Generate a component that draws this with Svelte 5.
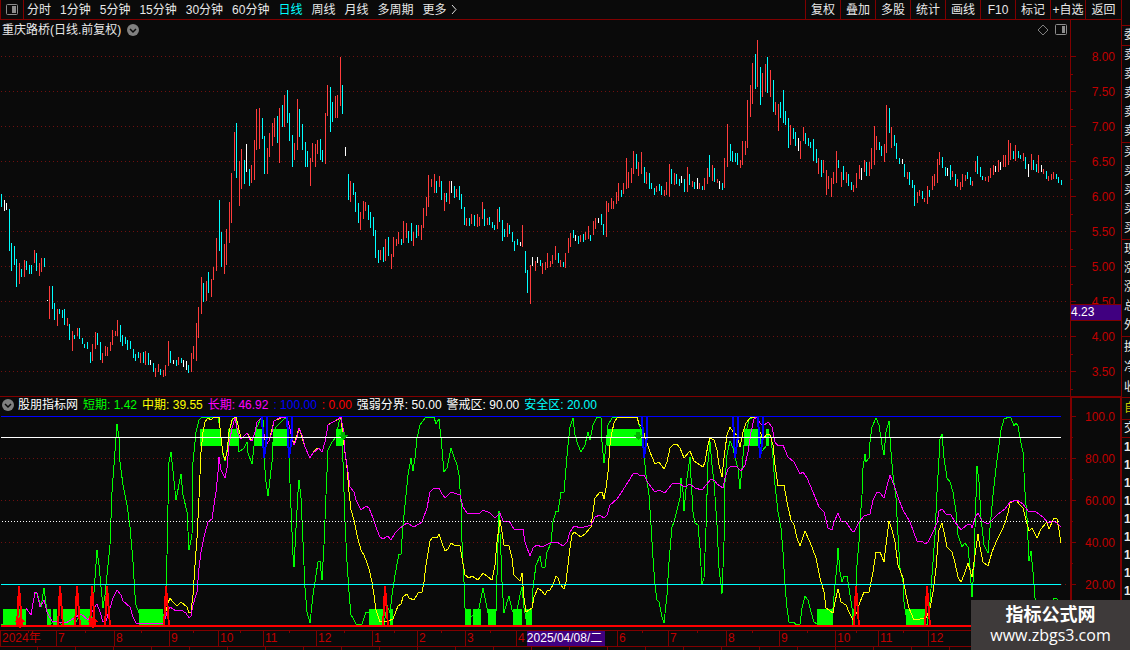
<script lang="ts">
  type Bar = { kind: string; x: number; top: number; height: number };

  const periods = ['分时', '1分钟', '5分钟', '15分钟', '30分钟', '60分钟', '日线', '周线', '月线', '多周期'];
  const tools = ['复权', '叠加', '多股', '统计', '画线', 'F10', '标记', '+自选', '返回'];
  let activePeriod = '日线';

  const priceLabels = ['8.00', '7.50', '7.00', '6.50', '6.00', '5.50', '5.00', '4.50', '4.00', '3.50'];
  const indexLabels = ['100.0', '80.00', '60.00', '40.00', '20.00'];

  const legend = [
    { text: '短期: 1.42', tone: 'green' },
    { text: '中期: 39.55', tone: 'yellow' },
    { text: '长期: 46.92', tone: 'magenta' },
    { text: ': 100.00', tone: 'blue' },
    { text: ': 0.00', tone: 'red' },
    { text: '强弱分界: 50.00', tone: 'white' },
    { text: '警戒区: 90.00', tone: 'white' },
    { text: '安全区: 20.00', tone: 'cyan' }
  ];

  // month cells, span = share of the axis width
  const months = [
    { name: '2024年', span: 56 },
    { name: '7', span: 58 },
    { name: '8', span: 55 },
    { name: '9', span: 49 },
    { name: '10', span: 45 },
    { name: '11', span: 53 },
    { name: '12', span: 56 },
    { name: '1', span: 45 },
    { name: '2', span: 48 },
    { name: '3', span: 51 },
    { name: '4', span: 101 },
    { name: '6', span: 51 },
    { name: '7', span: 58 },
    { name: '8', span: 53 },
    { name: '9', span: 56 },
    { name: '10', span: 43 },
    { name: '11', span: 50 },
    { name: '12', span: 193 }
  ];

  // side quote panel, cut off at the window edge
  const quoteGroups = [
    { kind: 'quote', rows: ['委'] },
    { kind: 'quote five', rows: ['卖', '卖', '卖', '卖', '卖'] },
    { kind: 'quote five', rows: ['买', '买', '买', '买', '买'] },
    { kind: 'quote five', rows: ['现', '涨', '涨', '总', '外'] },
    { kind: 'quote tall', rows: ['换', '净', '收'] },
    { kind: 'tab', rows: ['自'] },
    { kind: 'ticks', rows: ['交'] },
    { kind: 'ticks bold', rows: ['1', '1', '1', '1', '1', '1', '1', '1', '1'] }
  ];

  // kind + x, high, low (r = up, c = down, w = flat)
  const barData = `
    c1,194,207 w4,200,211 w6,203,210 c9,209,251 c11,243,271 c14,246,265 c16,259,287 r19,263,284 c21,269,277 r24,260,277
    c26,261,270 c29,265,274 c31,265,274 r34,250,263 c36,253,271 r39,263,276 r41,258,272 c44,258,267 w47,300,301 r49,286,319
    c52,286,309 c54,303,320 r57,309,326 c59,309,314 c62,310,318 c64,309,325 r67,318,326 c69,324,340 r72,331,351 c74,335,339
    r77,328,336 c79,328,339 c82,338,344 c84,344,348 c87,342,349 c90,352,363 r92,344,361 r95,332,349 c97,333,345 c100,342,360
    r102,353,363 r105,346,356 r107,347,356 r110,342,351 r112,330,345 r115,331,336 r117,320,336 c120,325,342 c122,335,346
    c125,337,344 c127,340,350 c130,341,349 c133,349,358 c135,354,361 c138,352,358 r140,353,363 c143,352,363 r145,351,365
    c148,353,365 w150,360,365 c153,363,372 r155,368,377 r158,364,372 c160,369,375 r163,370,377 r165,365,376 r168,341,366
    c170,351,363 w173,360,364 c176,360,366 r178,357,365 c181,358,363 w183,360,367 w186,361,370 c188,365,373 r191,353,372
    r193,346,359 r196,323,361 r198,307,338 r201,277,314 c203,283,302 r206,281,301 c208,272,293 r211,279,297 r213,267,280
    r216,238,271 c219,200,251 c221,232,267 r224,244,274 r226,229,265 r229,202,243 r231,173,223 r234,132,171 c236,123,178
    r239,161,206 r241,149,189 c244,160,184 w246,144,172 c249,169,186 r251,165,183 r254,140,180 r256,109,150 r259,108,149
    c262,118,139 c264,136,174 r267,148,174 r269,133,157 r272,123,146 r274,118,137 c277,116,143 r279,108,163 c282,105,127
    r284,95,127 c287,90,123 c289,113,141 c292,135,167 r294,143,160 r297,99,150 c299,109,137 c302,124,150 c305,142,167
    c307,151,167 r310,158,186 r312,143,162 r315,144,167 r317,140,154 c320,139,160 c322,150,162 r325,113,164 r327,85,116
    c330,87,132 c332,102,122 r335,96,118 r337,95,118 r340,57,106 c342,85,114 w345,147,156 c348,174,200 r350,181,202
    c353,183,195 c355,192,212 c358,203,223 r360,212,230 r363,201,219 r365,202,211 c368,205,220 c370,212,228 c373,217,236
    c375,230,258 c378,250,263 r380,250,260 c383,247,262 r385,239,261 c388,237,256 r391,254,269 r393,237,257 r396,239,246
    r398,232,244 c401,239,245 r403,221,243 r406,223,238 c408,231,243 c411,223,241 r413,232,246 c416,225,238 r418,225,236
    r421,225,240 r423,208,228 r426,197,216 r428,175,207 r431,179,187 r434,174,193 c436,181,193 r439,176,187 c441,181,200
    r444,193,211 c446,193,202 r449,181,204 w451,181,193 c454,186,198 r456,189,197 c459,186,200 c461,194,209 c464,207,225
    r466,218,226 c469,218,226 r471,214,224 c474,215,226 r477,214,227 r479,217,226 r482,202,219 c484,209,226 r487,218,225
    c489,217,225 c492,222,228 c494,225,230 r497,209,229 c499,207,222 c502,220,241 c504,229,237 r507,223,237 c509,225,234
    c512,232,242 c514,241,251 c517,239,245 w520,242,246 r522,225,247 c525,251,273 c527,270,293 r530,265,304 w532,257,266
    r535,261,271 w537,257,263 c540,260,266 r542,263,274 r545,262,270 r547,253,268 r550,261,267 r552,255,264 r555,246,260
    c558,253,263 r560,260,267 c563,262,267 r565,253,268 r568,238,253 r570,233,247 c573,230,238 w575,235,241 c578,236,244
    r580,235,242 c583,234,242 r585,232,240 r588,226,239 c590,235,241 r593,221,235 r595,218,229 w598,218,223 c601,214,225
    c603,224,235 r606,201,237 r608,203,212 r611,198,209 r613,201,209 r616,192,204 r618,183,201 c621,190,197 r623,183,194
    r626,158,189 r628,172,188 r631,168,183 r633,151,174 c636,154,169 r638,162,176 r641,152,174 c644,167,183 r646,172,184
    c649,173,189 c651,183,189 c654,188,195 r656,186,192 c659,184,191 c661,186,195 r664,190,196 r666,182,195 r669,164,197
    c671,169,184 r674,173,185 c676,174,184 c679,179,186 w681,176,183 c684,179,192 r687,167,192 c689,174,185 r692,181,187
    c694,182,189 w697,178,189 r699,183,189 c702,186,190 r704,178,190 r707,168,184 c709,155,177 r712,165,181 c714,168,182
    r717,179,183 w719,181,189 c722,183,190 r724,158,188 r727,124,167 c730,144,161 c732,151,162 c735,153,162 c737,153,165
    r740,160,168 r742,141,165 r745,141,155 r747,100,148 r750,85,117 r752,63,104 c755,54,89 r757,40,87 c760,67,105
    r762,73,97 r765,64,92 c767,57,93 r770,70,97 c773,80,112 r775,102,115 r778,104,131 c780,102,118 c783,90,123
    c785,111,125 c788,118,148 r790,125,145 c793,128,139 c795,132,146 w798,138,151 r800,141,159 r803,127,141 c805,133,144
    c808,138,146 c810,142,148 c813,139,161 c816,149,163 r818,158,174 c821,160,177 r823,160,173 r826,170,195 r828,176,189
    r831,178,197 r833,172,184 r836,151,183 c838,160,168 r841,172,187 c843,166,180 r846,172,183 c848,174,186 c851,182,190
    r853,185,192 r856,173,188 r859,165,179 w861,168,180 r864,160,172 c866,162,176 r869,162,176 r871,148,169 r874,126,165
    r876,136,150 c879,142,150 c881,146,156 r884,144,162 r886,105,153 c889,108,133 r891,127,148 c894,135,146 c896,143,159
    c899,158,164 w902,159,164 c904,164,177 r907,172,179 c909,172,185 c912,180,188 c914,185,206 r917,192,203 r919,190,196
    c922,191,199 r924,198,202 r927,186,204 c929,190,197 r932,176,190 r934,174,186 r937,159,183 r939,152,165 c942,157,168
    c945,167,176 w947,168,176 c950,165,180 r952,171,177 c955,174,186 r957,179,187 r960,182,190 r962,174,187 r965,175,181
    c967,172,179 c970,177,185 r972,181,186 r975,161,172 c977,156,174 c980,167,177 c982,176,180 r985,177,181 r988,176,182
    r990,168,178 r993,165,175 w995,166,172 r998,160,172 w1000,162,170 r1003,155,167 r1005,155,167 r1008,140,165 r1010,143,160
    c1013,151,159 r1015,145,161 c1018,151,158 c1020,155,159 r1023,153,161 c1025,157,169 w1028,164,177 r1031,154,170
    c1033,160,170 c1036,164,172 r1038,155,173 w1041,165,172 r1043,169,174 c1046,171,179 r1048,176,181 r1051,174,180
    r1053,172,179 c1056,174,179 c1058,177,183 c1061,180,185`;

  const bars: Bar[] = barData.trim().split(/\s+/).map((item) => {
    const [x, top, bottom] = item.slice(1).split(',').map(Number);
    return { kind: item[0], x, top, height: bottom - top };
  });

  const shortLine = `1,624 15,624 19,620 26,609 31,614 35,593 37,593 41,607 44,588 47,612 50,624 57,620 61,624 66,624 76,622 80,614
    83,624 90,621 94,592 97,550 99,565 103,608 105,595 108,565 110,545 112,492 114,465 117,424 119,438 120,462 123,485
    127,505 130,527 133,562 135,595 136,605 139,613 142,624 163,624 166,595 167,555 168,505 169,462 171,452 176,500
    181,474 183,495 187,512 189,550 192,535 193,462 196,432 199,420 202,417 218,417 220,428 223,455 225,461 228,445
    230,428 233,418 236,418 239,452 244,448 247,442 248,453 252,464 255,438 257,427 261,418 263,420 264,458 266,482
    268,496 269,488 272,462 273,442 276,427 285,418 287,418 289,458 291,508 293,555 294,567 296,528 298,492 299,480
    301,498 303,542 305,588 307,612 310,623 313,595 315,582 318,562 320,561 322,580 324,545 326,495 328,450 332,442
    336,437 339,422 341,418 342,432 343,462 345,522 347,562 349,592 351,615 353,618 356,624 362,624 366,612 369,613
    374,624 384,625 387,605 390,613 392,595 395,575 399,554 401,554 403,525 406,495 408,475 411,458 413,471 415,458
    417,438 420,425 425,418 427,417 434,417 436,424 439,419 441,438 444,472 447,468 449,458 451,448 454,457 457,465
    459,475 461,502 462,542 464,582 465,608 467,624 471,617 473,615 476,622 479,608 483,588 487,608 490,622 496,612
    497,575 499,511 501,555 502,582 504,613 507,602 509,596 512,610 516,616 520,595 522,587 524,608 527,624 532,608
    533,588 536,565 540,556 542,567 545,567 547,552 551,543 553,522 556,511 558,512 561,492 564,492 566,468 568,445
    570,427 573,418 575,435 578,445 581,452 585,445 588,432 590,440 593,425 597,417 601,418 602,442 604,463 606,445
    608,425 612,418 618,417 637,417 639,425 642,432 644,455 646,475 649,495 651,525 653,558 655,585 657,600 659,602
    662,617 664,623 667,595 669,562 672,527 674,522 677,510 680,498 681,478 683,492 684,511 687,478 690,457 691,478
    693,512 695,523 698,525 700,548 702,584 704,578 706,528 708,462 710,442 712,465 714,482 717,525 719,568 722,594
    724,542 725,482 727,455 730,441 733,448 735,458 738,468 740,489 742,468 744,445 746,432 749,420 753,417 757,417
    759,428 762,451 767,445 768,433 771,438 773,458 775,485 778,512 781,528 783,552 785,585 787,608 789,622 794,622
    796,625 800,624 802,608 805,596 808,600 811,612 814,622 817,624 828,624 833,608 835,585 837,565 838,548 840,572
    842,582 844,576 847,576 849,588 852,608 854,625 856,592 857,565 859,542 860,522 862,495 863,468 865,454 866,462
    869,458 870,442 872,427 876,418 879,425 882,445 884,455 886,432 889,421 891,452 893,475 896,498 898,535 900,568
    903,582 904,602 906,615 909,624 927,625 930,602 933,562 935,535 937,492 939,458 940,439 942,434 944,458 947,478
    950,482 953,492 956,512 958,535 962,547 965,543 968,547 970,568 972,597 974,568 975,528 977,466 979,482 981,518
    984,545 988,553 990,528 993,495 996,468 999,445 1001,430 1004,419 1009,417 1011,418 1014,426 1016,423 1018,426
    1021,443 1023,452 1025,492 1027,518 1029,561 1031,551 1033,572 1035,598 1037,618 1050,618 1054,598 1057,599 1061,612`;

  const middleLine = `165,615 168,603 170,598 173,602 177,606 181,602 187,607 189,613 191,612 193,595 195,565 197,538 199,498 201,452
    203,432 205,422 208,418 211,420 214,417 219,417 221,438 223,453 225,460 227,452 229,432 232,420 236,417 238,425
    241,439 247,433 252,441 255,432 257,422 261,418 266,445 269,441 274,421 283,417 287,417 289,425 294,445 299,428
    305,447 310,458 313,453 316,449 319,448 322,452 325,442 328,425 333,422 341,418 344,445 347,468 349,492 351,510
    354,520 357,535 361,550 364,555 367,563 369,569 372,582 374,595 376,610 380,622 388,621 393,619 398,606 401,604
    403,597 407,594 409,598 414,600 418,593 422,592 424,582 426,565 428,553 430,541 433,537 437,538 439,534 442,543
    445,551 448,549 451,543 454,545 460,546 462,558 465,575 469,578 472,576 478,580 483,573 488,577 492,580 495,565
    497,542 500,520 502,532 504,545 509,546 512,558 514,575 520,581 522,573 524,598 526,612 532,608 534,597 538,588
    542,591 545,595 547,591 550,590 553,585 556,576 558,578 560,584 564,589 566,582 568,565 570,548 572,535 574,532
    581,537 585,534 591,527 593,512 595,498 600,492 602,492 604,499 606,488 608,472 610,445 612,432 614,423 617,418
    622,417 637,417 639,424 642,427 646,440 650,452 655,464 659,462 664,469 667,462 670,448 673,445 677,444 680,448
    684,458 690,451 694,461 700,465 703,467 705,462 708,445 710,438 714,440 717,450 719,465 722,477 724,458 727,435
    730,427 733,432 737,435 740,447 743,432 746,423 750,418 757,417 760,432 763,439 767,434 770,435 773,445 775,465
    778,486 784,485 787,502 791,520 794,525 797,538 800,546 803,537 805,531 810,542 816,558 820,578 824,592 826,608
    833,613 835,602 838,589 841,602 846,605 849,612 853,620 857,612 860,602 864,592 869,592 873,572 876,552 880,552
    884,562 886,545 889,521 892,530 895,542 898,565 903,578 906,595 909,608 914,620 926,618 930,608 933,592 936,568
    939,530 942,523 945,537 947,547 952,552 955,563 958,577 961,582 964,575 968,563 970,570 972,577 975,555 978,534
    980,547 983,562 988,566 992,552 997,540 1002,530 1005,523 1008,513 1010,503 1016,500 1020,505 1023,508 1026,520
    1029,531 1032,528 1037,538 1041,529 1047,522 1049,529 1054,518 1057,519 1059,530 1061,543`;

  const longLine = `26,608 31,615 35,592 37,593 40,607 44,600 47,612 52,621 66,623 81,614 88,620 94,608 97,604 100,612 103,622
    106,621 110,608 113,598 117,590 121,595 123,601 130,607 133,617 136,623 139,624 164,623 167,612 170,607 176,611
    181,610 186,613 189,618 191,616 193,605 197,592 199,568 201,552 204,537 208,522 212,519 214,505 216,492 218,472
    219,457 221,470 225,478 227,468 229,445 232,428 235,418 238,433 241,439 247,433 250,440 252,441 255,432 257,422
    261,418 263,428 266,445 269,441 272,432 274,421 279,418 287,417 289,425 292,438 294,445 297,438 299,428 302,435
    305,447 310,458 313,453 319,448 322,452 325,442 328,425 333,422 338,419 341,417 343,428 345,452 348,472 350,487
    354,492 356,500 361,510 366,506 369,508 373,518 377,530 380,537 383,539 388,536 391,540 395,533 399,529 403,526
    407,523 414,527 422,522 427,508 430,492 433,489 439,488 442,494 445,498 451,492 460,495 463,507 467,513 479,514
    483,510 490,513 495,518 500,513 503,521 509,521 514,529 523,529 525,542 530,556 533,548 537,545 542,547 550,543
    557,542 563,546 567,542 570,532 574,526 581,528 591,525 595,517 600,515 604,518 607,515 610,505 617,499 623,490
    628,482 633,474 637,473 640,476 644,475 648,483 655,492 659,490 665,493 668,489 672,484 678,483 685,487 690,484
    695,488 702,490 706,485 711,479 715,481 717,484 723,488 725,478 728,469 731,466 737,467 741,471 745,465 748,452
    751,432 754,419 757,417 760,423 763,426 768,422 772,427 775,442 778,446 783,445 788,457 794,462 800,474 803,472
    807,478 813,492 819,507 824,512 828,528 832,530 834,522 838,513 841,521 846,522 852,531 854,532 859,522 864,516
    870,514 873,500 877,492 880,493 884,498 886,490 890,475 892,480 895,488 899,500 903,510 910,522 917,541 922,541
    925,544 928,542 933,532 937,523 939,511 942,509 946,514 951,515 955,522 961,530 968,524 971,525 972,528 975,518
    978,513 982,521 988,524 997,515 1005,509 1010,502 1017,500 1023,504 1028,511 1035,511 1043,517 1048,523 1053,521
    1057,523 1061,527`;

  // [from, to] of the signal blocks
  const warnBlocks = [[200, 221], [228, 239], [255, 263], [273, 288], [336, 343], [607, 642], [744, 758], [766, 769]];
  const safeBlocks = [
    [3, 26], [47, 51], [53, 57], [63, 76], [80, 92], [139, 163], [369, 383], [390, 393], [465, 471], [473, 481],
    [488, 496], [513, 522], [526, 532], [817, 833], [852, 854], [906, 925]
  ];
  const buySpikes = [19, 60, 77, 92, 107, 166, 385, 856, 927];
  const sellSpikes = [264, 289, 644, 735, 760];
</script>

<main class="app">
  <div class="board">
    <header class="toolbar">
      <button class="layout" aria-label="布局">
        <svg width="12" height="12" viewBox="0 0 12 12">
          <rect x="0.5" y="0.5" width="11" height="10" rx="1" fill="none" stroke="#8c8c8c" />
          <rect x="6" y="2" width="4" height="7" fill="#8c8c8c" />
        </svg>
      </button>
      <nav class="periods">
        {#each periods as period}
          <button class:active={period === activePeriod} on:click={() => (activePeriod = period)}>{period}</button>
        {/each}
        <button class="more">更多
          <svg width="6" height="9" viewBox="0 0 6 9"><path d="M1 0L5 4.500L1 9" fill="none" stroke="#e0e0e0" /></svg>
        </button>
      </nav>
      <div class="tools">
        {#each tools as tool}
          <button>{tool}</button>
        {/each}
      </div>
    </header>

    <section class="pane price">
      <div class="plot">
        <div class="title">
          <span>重庆路桥(日线.前复权)</span>
          <button class="round" aria-label="展开">
            <svg width="12" height="12" viewBox="0 0 12 12">
              <circle cx="6" cy="6" r="6" fill="#808080" />
              <path d="M3 5L6 8L9 5" fill="none" stroke="#0a0a0a" stroke-width="1.500" />
            </svg>
          </button>
          <div class="title-icons">
            <svg width="12" height="12" viewBox="0 0 12 12"><path d="M6 1L11 6L6 11L1 6Z" fill="none" stroke="#808080" /></svg>
            <svg width="12" height="12" viewBox="0 0 12 12">
              <rect x="0.5" y="0.5" width="11" height="10" rx="1" fill="none" stroke="#8c8c8c" />
              <rect x="7" y="2" width="3" height="7" fill="#8c8c8c" />
            </svg>
          </div>
        </div>
        <svg class="canvas" height="358" viewBox="0 38 1070 358" preserveAspectRatio="none">
          {#each priceLabels as _, i}
            <path class="grid" d="M1 {56.5 + i * 35}H1067" />
          {/each}
          {#each bars as bar}
            <rect class="bar {bar.kind}" x={bar.x} y={bar.top} width="1" height={bar.height} />
          {/each}
        </svg>
      </div>
      <div class="axis">
        <svg class="marks" width="6" height="376" viewBox="0 20 6 376">
          {#each priceLabels as _, i}
            <rect x="0" y={56 + i * 35} width="5" height="1" />
            <rect x="0" y={74 + i * 35} width="2" height="1" />
          {/each}
        </svg>
        <ul>
          {#each priceLabels as label}
            <li>{label}</li>
          {/each}
        </ul>
        <span class="price-tag">4.23</span>
      </div>
    </section>

    <section class="pane index">
      <div class="plot">
        <div class="legend">
          <button class="round" aria-label="展开">
            <svg width="12" height="12" viewBox="0 0 12 12">
              <circle cx="6" cy="6" r="6" fill="#808080" />
              <path d="M3 5L6 8L9 5" fill="none" stroke="#0a0a0a" stroke-width="1.500" />
            </svg>
          </button>
          <span>股朋指标网</span>
          {#each legend as item}
            <span class={item.tone}>{item.text}</span>
          {/each}
        </div>
        <svg class="canvas" height="216" viewBox="0 414 1070 216" preserveAspectRatio="none">
          {#each [458, 500, 542, 584] as y}
            <path class="grid" d="M1 {y + 0.5}H1067" />
          {/each}
          {#each warnBlocks as [from, to]}
            <rect class="block" x={from} y="429" width={to - from} height="17" />
          {/each}
          {#each safeBlocks as [from, to]}
            <rect class="block" x={from} y="609" width={to - from} height="16" />
          {/each}
          <polyline class="line short" points={shortLine} />
          <polyline class="line middle" points={middleLine} />
          <polyline class="line long" points={longLine} />

          <rect x="1" y="416" width="1060" height="1" fill="#0000ff" />
          {#each sellSpikes as x}
            <path class="sell" d="M{x - 2} 416L{x} 458L{x + 3} 436V416" />
          {/each}
          <rect x="1" y="437" width="1060" height="1" fill="#fff" />
          <path d="M2 521.500H1061" stroke="#fff" stroke-dasharray="1 2" />
          <rect x="1" y="584" width="1060" height="1" fill="#00ffff" />
          <rect x="1" y="625" width="1060" height="2" fill="#ff0000" />
          {#each buySpikes as x}
            <path class="buy" d="M{x - 2} 626L{x} 586L{x + 3} 626" />
          {/each}
          {#each [20, 93] as x}
            <path d="M{x} 616l5 6h-3v4h-1v2h-2v-2h-1v-4h-3z" fill="#ff0000" />
          {/each}
          {#each [343, 638] as x}
            <path d="M{x - 2} 432h4v3h3l-5 5l-5-5h3z" fill="#00b400" />
          {/each}
        </svg>
      </div>
      <div class="axis">
        <svg class="marks" width="6" height="232" viewBox="0 398 6 232">
          {#each indexLabels as _, i}
            <rect x="0" y={416 + i * 42} width="4" height="1" />
            <rect x="0" y={437 + i * 42} width="1" height="1" />
          {/each}
        </svg>
        <ul>
          {#each indexLabels as label}
            <li>{label}</li>
          {/each}
        </ul>
      </div>
    </section>

    <div class="timeline">
      {#each months as month}
        <span class="month" style="flex-grow: {month.span}">{month.name}</span>
      {/each}
      <span class="date-tag">2025/04/08/二</span>
    </div>
    <div class="strip"></div>
  </div>

  <aside class="quotes">
    {#each quoteGroups as group}
      <ul class={group.kind}>
        {#each group.rows as row}
          <li>{row}</li>
        {/each}
      </ul>
    {/each}
  </aside>

  <div class="watermark">
    <strong>指标公式网</strong>
    <span>www.zbgs3.com</span>
  </div>
</main>

<style>
  :global(body) {
    margin: 0;
    background: #0a0a0a;
  }

  .app {
    position: relative;
    display: grid;
    grid-template-columns: minmax(0, 1fr) 9px;
    height: 100vh;
    overflow: hidden;
    background: #0a0a0a;
    color: #e8e8e8;
    font: 12px/16px "Liberation Sans", "Noto Sans CJK SC", sans-serif;
    white-space: nowrap;
  }

  ul {
    margin: 0;
    padding: 0;
    list-style: none;
  }

  svg {
    display: block;
    flex-shrink: 0;
  }

  button {
    padding: 0;
    border: 0;
    background: none;
    color: inherit;
    font: inherit;
    cursor: pointer;
  }

  /* Toolbar */
  .toolbar {
    display: flex;
    height: 19px;
    border-bottom: 1px solid #800000;
  }

  .layout {
    display: flex;
    align-items: center;
    justify-content: center;
    width: 24px;
    border-left: 1px solid #800000;
    border-right: 1px solid #800000;
    box-sizing: border-box;
  }

  .periods {
    display: flex;
    gap: 9px;
    padding-left: 3px;
  }

  .periods .active { color: #00ffff; }

  .more {
    display: flex;
    align-items: center;
    gap: 4px;
  }

  .tools {
    display: flex;
    margin-left: auto;
  }

  .tools button {
    width: 35px;
    border-left: 1px solid #800000;
    box-sizing: border-box;
  }

  .tools button:last-child {
    width: 36px;
  }

  /* Charts */
  .pane {
    display: grid;
    grid-template-columns: minmax(0, 1fr) 51px;
  }

  .title {
    display: flex;
    align-items: center;
    gap: 6px;
    height: 18px;
    padding: 1px 3px 0 2px;
    box-sizing: border-box;
  }

  .title-icons {
    display: flex;
    gap: 6px;
    margin-left: auto;
  }

  .legend {
    display: flex;
    align-items: center;
    gap: 5px;
    height: 17px;
    padding: 0 0 2px 2px;
    box-sizing: border-box;
    color: #fff;
  }

  .legend .round { margin-right: -1px; }

  .canvas {
    width: 100%;
    shape-rendering: crispEdges;
  }

  .axis {
    position: relative;
    border-left: 1px solid #800000;
    box-sizing: border-box;
    color: #c00000;
    text-align: right;
  }

  .axis ul { padding-right: 6px; }
  .price .axis ul { padding-top: 20px; }
  .price li { height: 35px; line-height: 35px; }
  .index li { height: 42px; line-height: 42px; }

  .index {
    height: 234px;
    border-top: 1px solid #800000;
    box-sizing: border-box;
  }

  .index .axis {
    border: solid #800000;
    border-width: 1px 1px 0 2px;
  }

  .index .axis ul {
    margin-top: -2px;
    padding-right: 5px;
  }

  .marks {
    position: absolute;
    left: 0;
    top: 0;
    fill: #800000;
  }

  .price-tag {
    position: absolute;
    top: 284px;
    left: 0;
    right: 0;
    height: 15px;
    border: solid #800000;
    border-width: 1px 0;
    background: #400080;
    color: #fff;
    line-height: 15px;
    text-align: left;
  }

  .grid {
    fill: none;
    stroke: #701010;
    stroke-dasharray: 1 3;
  }

  .bar.r { fill: #ff3c3c; }
  .bar.c { fill: #00ffff; }
  .bar.w { fill: #fff; }

  .block { fill: #00ff00; }
  .line { fill: none; }
  .short { stroke: #00ff00; }
  .middle { stroke: #ffff00; }
  .long { stroke: #ff00ff; }
  .sell { fill: none; stroke: #0000ff; stroke-width: 2; }
  .buy { fill: none; stroke: #ff0000; stroke-width: 2; }

  .green { color: #00ff00; }
  .yellow { color: #ffff00; }
  .magenta { color: #ff00ff; }
  .blue { color: #0000ff; }
  .red { color: #ff0000; }
  .cyan { color: #00ffff; }

  /* Time axis */
  .timeline {
    position: relative;
    display: flex;
    height: 15px;
    border: solid #800000;
    border-width: 1px 0;
    color: #c00000;
    line-height: 15px;
  }

  .month {
    flex: 1 1 0;
    min-width: 0;
    text-indent: 2px;
    background:
      linear-gradient(#800000, #800000) 0 0 / 1px 100% no-repeat,
      linear-gradient(#800000, #800000) 50% 0 / 1px 2px no-repeat;
  }

  .date-tag {
    position: absolute;
    left: 47%;
    top: 0;
    width: 78px;
    background: #400080;
    color: #fff;
  }

  .strip {
    height: 3px;
    background: repeating-linear-gradient(90deg, transparent 0 37px, #800000 37px 38px);
  }

  /* Quotes */
  .quotes {
    overflow: hidden;
    padding-top: 25px;
    border-left: 1px solid #800000;
  }

  .quotes ul {
    padding-left: 2px;
    border-top: 1px solid #800000;
  }

  .quote li { height: 19px; line-height: 19px; }
  .quotes .five { padding-bottom: 1px; }
  .tall li { height: 20px; line-height: 20px; }
  .tab li { height: 21px; line-height: 21px; color: #c8c800; }
  .ticks li { height: 17px; line-height: 17px; }
  .quotes .bold li { height: 18px; line-height: 18px; font-weight: bold; }

  .watermark {
    position: absolute;
    right: 0;
    bottom: 0;
    display: flex;
    flex-direction: column;
    align-items: center;
    width: 159px;
    height: 50px;
    padding-top: 5px;
    box-sizing: border-box;
    background: #3e3a3a;
    color: #fff;
  }

  .watermark strong {
    font-size: 18px;
    line-height: 20px;
  }

  .watermark span {
    font-family: "Open Sans", sans-serif;
    font-size: 16px;
    line-height: 20px;
  }
</style>
